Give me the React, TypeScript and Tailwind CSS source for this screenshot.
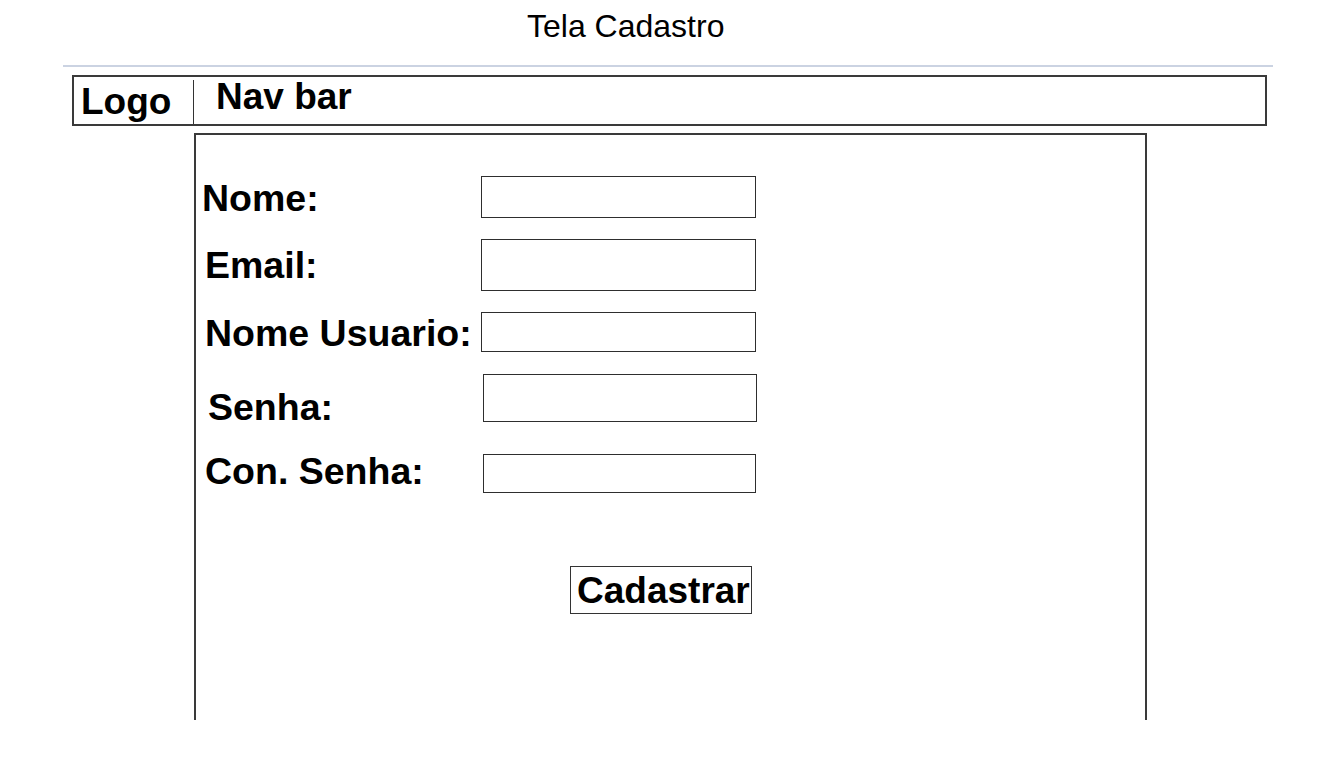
import React from "react";

type Field = {
  label: string;
  row: string;
  labelBox: string;
  input: string;
};

// per-row offsets, taken from the wireframe
const fields: Field[] = [
  { label: "Nome:", row: "mt-[41px] h-[42px]", labelBox: "w-[285px] pl-[6px] mt-[4px]", input: "w-[275px] h-[42px]" },
  { label: "Email:", row: "mt-[21px] h-[52px]", labelBox: "w-[285px] pl-[9px] mt-[8px]", input: "w-[275px] h-[52px]" },
  { label: "Nome Usuario:", row: "mt-[21px] h-[40px]", labelBox: "w-[285px] pl-[9px] mt-[3px]", input: "w-[275px] h-[40px]" },
  { label: "Senha:", row: "mt-[22px] h-[48px]", labelBox: "w-[287px] pl-[12px] mt-[15px]", input: "w-[274px] h-[48px]" },
  { label: "Con. Senha:", row: "mt-[32px] h-[39px]", labelBox: "w-[287px] pl-[9px] -mt-px", input: "w-[273px] h-[39px]" },
];

export default function App() {
  return (
    <div className="h-[780px] w-full overflow-hidden bg-white text-black font-['Liberation_Sans',Arial,sans-serif]">
      <h1 className="pl-[527px] pt-[10px] text-[32px] font-normal leading-none">Tela Cadastro</h1>

      <div className="ml-[63px] mt-[23px] h-[2px] w-[1210px] bg-[#cbd3e2]" />

      <nav className="ml-[72px] mt-[8px] flex h-[51px] w-[1195px] items-start border-2 border-[#3a3a3a]">
        <div className="mt-[6px] w-[119px] pl-[7px] text-[37px] font-bold leading-none">Logo</div>
        <div className="mt-[3px] w-px self-stretch bg-[#333]" />
        <div className="mt-px pl-[22px] text-[37px] font-bold leading-none">Nav bar</div>
      </nav>

      <main className="ml-[194px] mt-[7px] flex h-[587px] w-[953px] flex-col border-2 border-b-0 border-[#3a3a3a]">
        {fields.map((f) => (
          <div key={f.label} className={`flex items-start ${f.row}`}>
            <label className={`whitespace-nowrap text-[37.5px] font-bold leading-none ${f.labelBox}`}>{f.label}</label>
            <input type="text" className={`border border-[#2e2e2e] bg-white outline-none ${f.input}`} />
          </div>
        ))}

        <button
          type="button"
          className="ml-[374px] mt-[73px] h-[48px] w-[182px] whitespace-nowrap border border-[#333] pl-[6px] text-left text-[37px] font-bold leading-none"
        >
          Cadastrar
        </button>
      </main>
    </div>
  );
}
